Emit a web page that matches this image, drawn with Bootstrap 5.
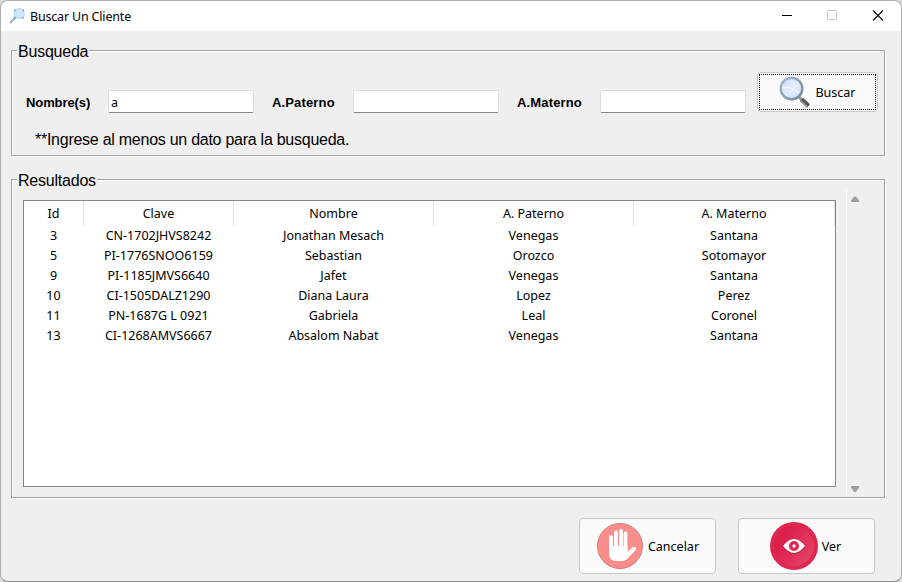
<!DOCTYPE html>
<html lang="es">
<head>
<meta charset="utf-8">
<title>Buscar Un Cliente</title>
<link href="https://cdn.jsdelivr.net/npm/bootstrap@5.3.0/dist/css/bootstrap.min.css" rel="stylesheet">
<style>
body{background:#d9d9d9;font:12.5px/18px "Noto Sans","Open Sans",sans-serif;color:#000;width:902px;height:582px}
.win{width:902px;height:582px;background:#efefef;border:1px solid #adadad;border-bottom-color:#8a8a8a;border-radius:8px}
.titlebar{height:30px;padding:0 17px 0 8px}
.titlebar .caption-text{margin-left:5px;padding-top:2px;letter-spacing:-.18px}
.controls{gap:34px}
.group{margin:0 16px 0 10px;border:1px solid #a0a0a0;box-shadow:inset 1px 1px #fff,1px 1px #fff}
.group-search{height:106px;margin-top:19px}
.group-results{height:319px;margin-top:23px}
.group-title{font:16px/22px "Liberation Sans",Arial,sans-serif;background:#efefef;width:max-content;height:20px;margin:-10px 0 0 5px;padding:0 1px;letter-spacing:-.22px}
.fields{height:40px;margin:11px 6px 0 14px}
.fields label{font:bold 13px/16px "Liberation Sans",Arial,sans-serif;flex:none;margin-top:22px}
.entry{width:146px;height:23px;flex:none;margin-top:18px;padding:3px 2px 0;font-size:12.5px;line-height:18px;color:#000;background:#fff;border:1px solid #dedede;border-bottom-color:#858585;border-radius:2px}
.entry:focus{box-shadow:none}
.tool-btn{--bs-btn-padding-x:0;--bs-btn-padding-y:0;--bs-btn-font-size:12.5px;--bs-btn-line-height:18px;--bs-btn-bg:#fbfbfb;--bs-btn-color:#000;--bs-btn-border-color:#c8c8c8;--bs-btn-border-radius:4px;flex:none}
.tool-btn svg{flex:none}
.btn-text{padding-top:2px}
.search-btn{width:121px;height:40px;padding:1px}
.search-btn>.focus-frame{width:100%;height:100%;border:1px dotted #000}
.hint{font:16px/20px "Liberation Sans",Arial,sans-serif;margin:18px 0 0 23px;letter-spacing:-.26px}
.results{margin-left:11px}
.grid{width:813px;height:287px;margin-top:10px;background:#fff;border:1px solid #82878f}
.grid table{width:811px;table-layout:fixed;line-height:20px;border-collapse:separate;border-spacing:0}
.grid th,.grid td{padding:0;text-align:center;font-weight:400;height:20px;white-space:nowrap}
.grid th{height:25px;padding-top:1px;border-right:1px solid #e1e1e1}
.grid td{padding-right:1px}
.scroll{width:20px;height:307px;margin-left:10px;border-left:1px solid #fff;padding:6px 0 4px 4px}
.actions{margin-top:20px;padding-right:26px;gap:22px}
.action-btn{width:137px;height:56px}
.view-btn{padding-right:2px}
</style>
<script src="https://cdn.jsdelivr.net/npm/bootstrap@5.3.0/dist/js/bootstrap.bundle.min.js"></script>
</head>
<body class="overflow-hidden">
<main class="win overflow-hidden">
  <header class="titlebar bg-white d-flex align-items-center justify-content-between">
    <div class="d-flex align-items-center">
      <svg width="16" height="16" viewBox="0 0 16 16"><path d="M1 15 8 8" stroke="#9fb4c8" stroke-width="2.2"/><circle cx="10.2" cy="5.6" r="5" fill="#cce8ff" stroke="#b4d3f0"/><path d="M5 1.500h2.500L5 4zM13.500.5 15.500 2.500 14 4zM5 8l2.500 2.500H5zM12.500 10.500 15 8.500v2z" fill="#6a9fd8"/></svg>
      <span class="caption-text">Buscar Un Cliente</span>
    </div>
    <div class="controls d-flex align-items-center">
      <svg width="11" height="12"><path d="M0 5.500h10" stroke="#000"/></svg>
      <svg width="11" height="12"><rect x=".5" y=".5" width="9" height="9" rx="1" fill="none" stroke="#c6c6c6"/></svg>
      <svg width="12" height="12"><path d="M1 .5 11 10.500M11 .5 1 10.500" stroke="#111" stroke-width="1.150"/></svg>
    </div>
  </header>

  <section class="group group-search">
    <div class="group-title">Busqueda</div>
    <div class="fields d-flex align-items-center">
      <label for="nombre" style="width:82px;letter-spacing:-.1px">Nombre(s)</label>
      <input id="nombre" class="entry form-control" value="a">
      <label for="paterno" style="width:81px;margin-left:18px;letter-spacing:.15px">A.Paterno</label>
      <input id="paterno" class="entry form-control">
      <label for="materno" style="width:83px;margin-left:18px;letter-spacing:.15px">A.Materno</label>
      <input id="materno" class="entry form-control">
      <button class="btn tool-btn search-btn ms-auto">
        <span class="focus-frame d-flex align-items-center justify-content-center gap-1">
          <svg width="32" height="32" viewBox="0 0 32 32">
            <defs><linearGradient id="lens" x1="0" y1="0" x2="1" y2="1"><stop stop-color="#c3d8ff"/><stop offset=".5" stop-color="#e4edff"/><stop offset="1" stop-color="#c9dcff"/></linearGradient>
            <linearGradient id="rim" x1="0" y1="0" x2="1" y2="1"><stop stop-color="#a9bac9"/><stop offset="1" stop-color="#71879b"/></linearGradient></defs>
            <path d="m20 21 3 3" stroke="#8c98a2" stroke-width="3"/>
            <path d="m22.500 23.500 7 6.500" stroke="#555" stroke-width="4.500"/><path d="m22 25 6.500 6" stroke="#aaa" stroke-width="1.200"/>
            <circle cx="12.500" cy="12.500" r="10.800" fill="url(#lens)" stroke="url(#rim)" stroke-width="2.400"/>
            <path d="M4 12q8-2 16 5" stroke="#f5f9ff" fill="none" stroke-width="1.500"/>
          </svg>
          <span class="btn-text">Buscar</span></span>
      </button>
    </div>
    <p class="hint">**Ingrese al menos un dato para la busqueda.</p>
  </section>

  <section class="group group-results">
    <div class="group-title">Resultados</div>
    <div class="results d-flex">
      <div class="grid">
        <table>
          <colgroup><col style="width:60px"><col style="width:150px"><col style="width:200px"><col style="width:200px"><col style="width:201px"></colgroup>
          <thead><tr><th>Id</th><th>Clave</th><th>Nombre</th><th>A. Paterno</th><th>A. Materno</th></tr></thead>
          <tbody>
            <tr><td>3</td><td>CN-1702JHVS8242</td><td>Jonathan Mesach</td><td>Venegas</td><td>Santana</td></tr>
            <tr><td>5</td><td>PI-1776SNOO6159</td><td>Sebastian</td><td>Orozco</td><td>Sotomayor</td></tr>
            <tr><td>9</td><td>PI-1185JMVS6640</td><td>Jafet</td><td>Venegas</td><td>Santana</td></tr>
            <tr><td>10</td><td>CI-1505DALZ1290</td><td>Diana Laura</td><td>Lopez</td><td>Perez</td></tr>
            <tr><td>11</td><td>PN-1687G L 0921</td><td>Gabriela</td><td>Leal</td><td>Coronel</td></tr>
            <tr><td>13</td><td>CI-1268AMVS6667</td><td>Absalom Nabat</td><td>Venegas</td><td>Santana</td></tr>
          </tbody>
        </table>
      </div>
      <div class="scroll d-flex flex-column justify-content-between">
        <svg width="8" height="7"><path d="M0 6V4.500L3 .5h2l3 4V6z" fill="#a0a0a0"/></svg>
        <svg width="8" height="7"><path d="M0 0v1.500l3 4.500h2l3-4.500V0z" fill="#a0a0a0"/></svg>
      </div>
    </div>
  </section>

  <footer class="actions d-flex justify-content-end">
    <button class="btn tool-btn action-btn d-flex align-items-center justify-content-center gap-1">
      <svg width="48" height="48" viewBox="0 0 48 48"><circle cx="24" cy="24" r="22.500" fill="#f98d8b" stroke="#d87876"/>
        <g stroke="#fff" stroke-width="3.800" stroke-linecap="round" fill="none"><path d="M15 15v17M20 10.500V28M25 9v19M29.500 11.500V28"/></g>
        <path d="M13.100 24h18.300v6l5-4.500q2-1.300 3.300 0 1 1.300-.3 2.800L31 37q-2 2-5 2h-6q-6.900 0-6.900-7z" fill="#fff"/></svg>
      <span class="btn-text">Cancelar</span>
    </button>
    <button class="btn tool-btn action-btn view-btn d-flex align-items-center justify-content-center gap-1">
      <svg width="48" height="48" viewBox="0 0 48 48"><defs><linearGradient id="disc" x1="0" y1=".2" x2="1" y2=".8"><stop offset=".2" stop-color="#dc1f4b"/><stop offset="1" stop-color="#e54468"/></linearGradient></defs>
        <circle cx="24" cy="24" r="24" fill="#df2850"/><circle cx="24" cy="24" r="20" fill="url(#disc)"/>
        <path d="M13 25q11-15 22 0-11 14-22 0" fill="#a91d3d"/>
        <path d="M13 24q11-14 22 0-11 14-22 0" fill="#fff"/><circle cx="24" cy="24" r="5" fill="#df2850"/><circle cx="24" cy="24" r="1.700" fill="#fff"/></svg>
      <span class="btn-text">Ver</span>
    </button>
  </footer>
</main>
</body>
</html>
